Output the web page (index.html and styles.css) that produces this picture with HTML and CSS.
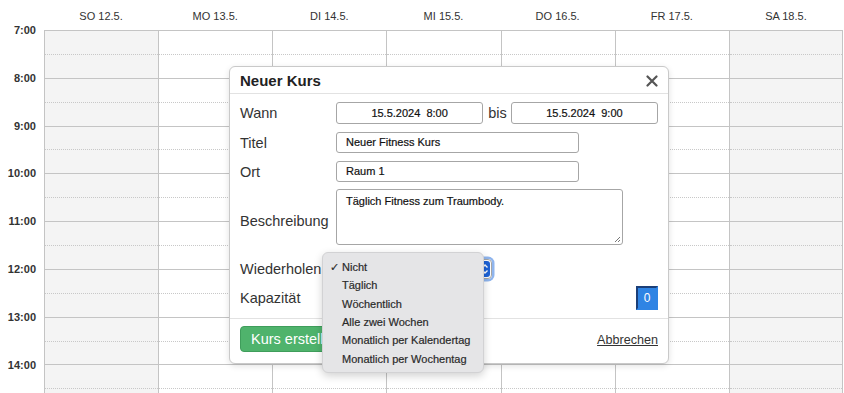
FILE: index.html
```html
<!DOCTYPE html>
<html lang="de">
<head>
    <meta charset="UTF-8">
    <meta name="viewport" content="width=device-width, initial-scale=1.0">
    <title>Kursplan</title>
    <link rel="stylesheet" href="styles.css">
</head>
<body>
    <div class="calendar">
        <div class="head-row">
            <div class="head-corner"></div>
            <div class="day-name">SO 12.5.</div>
            <div class="day-name">MO 13.5.</div>
            <div class="day-name">DI 14.5.</div>
            <div class="day-name">MI 15.5.</div>
            <div class="day-name">DO 16.5.</div>
            <div class="day-name">FR 17.5.</div>
            <div class="day-name">SA 18.5.</div>
        </div>
        <div class="grid" id="grid">
            <!-- Zeitspalte und Tage werden per Script erzeugt -->
        </div>
    </div>

    <div class="modal">
        <div class="modal-header">
            <h2 class="modal-title">Neuer Kurs</h2>
            <span class="modal-close">
                <svg width="12" height="12" viewBox="0 0 12 12"><path d="M1.5 1.5 L10.5 10.5 M10.5 1.5 L1.5 10.5" stroke="#555" stroke-width="2.2" stroke-linecap="round"/></svg>
            </span>
        </div>
        <div class="modal-body">
            <div class="form-row row-wann">
                <label class="form-label">Wann</label>
                <div class="field date-field">15.5.2024  8:00</div>
                <span class="bis">bis</span>
                <div class="field date-field">15.5.2024  9:00</div>
            </div>
            <div class="form-row row-titel">
                <label class="form-label">Titel</label>
                <div class="field text-field">Neuer Fitness Kurs</div>
            </div>
            <div class="form-row row-ort">
                <label class="form-label">Ort</label>
                <div class="field text-field">Raum 1</div>
            </div>
            <div class="form-row row-beschreibung">
                <label class="form-label">Beschreibung</label>
                <div class="field textarea-field">Täglich Fitness zum Traumbody.
                    <svg class="resize-grip" width="8" height="8" viewBox="0 0 8 8"><path d="M7 2 L2 7 M7 5 L5 7" stroke="#777" stroke-width="1"/></svg>
                </div>
            </div>
            <div class="form-row row-wiederholen">
                <label class="form-label">Wiederholen</label>
                <div class="select-field">
                    <span class="select-stepper">
                        <svg width="8" height="12" viewBox="0 0 8 12"><path d="M1.5 4.5 L4 2 L6.5 4.5 M1.5 7.5 L4 10 L6.5 7.5" stroke="#fff" stroke-width="1.4" fill="none"/></svg>
                    </span>
                </div>
            </div>
            <div class="form-row row-kapazitaet">
                <label class="form-label">Kapazität</label>
                <div class="number-field">0</div>
            </div>
        </div>
        <div class="modal-footer">
            <button class="btn btn-success">Kurs erstellen</button>
            <a class="link-cancel">Abbrechen</a>
        </div>
    </div>

    <div class="dropdown">
        <div class="dropdown-item"><span class="check">✓</span>Nicht</div>
        <div class="dropdown-item"><span class="check"></span>Täglich</div>
        <div class="dropdown-item"><span class="check"></span>Wöchentlich</div>
        <div class="dropdown-item"><span class="check"></span>Alle zwei Wochen</div>
        <div class="dropdown-item"><span class="check"></span>Monatlich per Kalendertag</div>
        <div class="dropdown-item"><span class="check"></span>Monatlich per Wochentag</div>
    </div>

    <script>
        // Raster aufbauen: Stunden 7 bis 14, halbstündige Slots
        const hours = [7, 8, 9, 10, 11, 12, 13, 14];
        const slots = 16;
        const grid = document.getElementById('grid');

        let times = '<div class="time-col">';
        hours.forEach(h => {
            times += `<div class="time-cell">${h}:00</div>`;
        });
        times += '</div>';

        let days = '';
        for (let d = 0; d < 7; d++) {
            const weekend = d === 0 || d === 6;
            days += `<div class="day-col ${weekend ? 'weekend' : ''}">`;
            for (let s = 0; s < slots; s++) {
                days += `<div class="slot ${s % 2 === 0 ? 'slot-half' : 'slot-hour'}"></div>`;
            }
            days += '</div>';
        }

        grid.innerHTML = times + days;
    </script>
</body>
</html>
```

FILE: styles.css
```css
* {
    margin: 0;
    padding: 0;
    box-sizing: border-box;
    font-family: "Liberation Sans", Arial, sans-serif;
}

html, body {
    height: 100%;
    overflow: hidden;
}

body {
    background-color: white;
    color: #333;
    position: relative;
}

.head-row,
.grid {
    display: grid;
    grid-template-columns: 44px repeat(7, 1fr);
    width: 843px;
}

.head-row {
    height: 30px;
    align-items: center;
}

.day-name {
    text-align: center;
    font-size: 11px;
    color: #333;
    padding-top: 2px;
}

.time-col {
    margin-top: -6px;
}

.time-cell {
    height: 47.8px;
    line-height: 12px;
    font-size: 11px;
    font-weight: bold;
    color: #333;
    text-align: right;
    padding-right: 8px;
}

.day-col {
    border-left: 1px solid #c4c4c4;
    border-top: 1px solid #c4c4c4;
}

.day-col:last-child {
    border-right: 1px solid #c4c4c4;
}

.weekend {
    background-color: #f4f4f4;
}

.slot {
    height: 23.9px;
}

.slot-half {
    border-bottom: 1px dotted #c8c8c8;
}

.slot-hour {
    border-bottom: 1px solid #c4c4c4;
}

.modal {
    position: absolute;
    left: 229px;
    top: 66px;
    width: 440px;
    height: 298px;
    background-color: white;
    border: 1px solid #c9c9c9;
    border-radius: 6px;
    box-shadow: 0 2px 6px rgba(0, 0, 0, 0.12);
}

.modal-header {
    display: flex;
    justify-content: space-between;
    align-items: center;
    height: 27px;
    padding: 0 10px 0 10px;
    border-bottom: 1px solid #e2e2e2;
}

.modal-title {
    font-size: 15px;
    font-weight: bold;
    color: #222;
    padding-top: 1px;
}

.modal-close {
    display: flex;
    padding-top: 2px;
}

.modal-body {
    padding: 8px 10px 8px 10px;
    border-bottom: 1px solid #e2e2e2;
}

.form-row {
    display: flex;
    align-items: center;
}

.form-label {
    width: 96px;
    flex-shrink: 0;
    font-size: 14.5px;
    color: #333;
}

.field {
    background-color: white;
    border: 1px solid #a6a6a6;
    border-radius: 3px;
    font-size: 11px;
    color: #111;
    -webkit-text-stroke: 0.2px #111;
}

.row-wann {
    height: 22px;
    margin-bottom: 8px;
}

.date-field {
    flex: 1;
    height: 22px;
    line-height: 20px;
    text-align: center;
    white-space: pre;
}

.bis {
    font-size: 14.5px;
    margin: 0 4px 0 5px;
}

.row-titel,
.row-ort {
    height: 21px;
    margin-bottom: 8px;
}

.row-ort {
    margin-bottom: 7px;
}

.text-field {
    width: 243px;
    height: 21px;
    line-height: 19px;
    padding-left: 9px;
}

.row-beschreibung {
    height: 56px;
    margin-bottom: 14px;
}

.row-beschreibung .form-label {
    padding-top: 8px;
}

.textarea-field {
    position: relative;
    width: 287px;
    height: 56px;
    padding: 5px 9px;
    line-height: 13px;
}

.resize-grip {
    position: absolute;
    right: 1px;
    bottom: 1px;
}

.row-wiederholen {
    height: 20px;
    margin-bottom: 7px;
}

.select-field {
    position: relative;
    width: 156px;
    height: 20px;
    border: 1px solid #a6a6a6;
    border-radius: 4px;
    box-shadow: 0 0 0 2.5px #8fb5ee;
}

.select-stepper {
    position: absolute;
    right: 1px;
    top: 1px;
    width: 10px;
    height: 16px;
    background-color: #1d62d6;
    border-radius: 3px;
    display: flex;
    align-items: center;
    justify-content: center;
}

.row-kapazitaet {
    height: 24px;
    justify-content: space-between;
}

.number-field {
    width: 22px;
    height: 24px;
    background-color: #2f84e4;
    border: 2px solid #1b3f78;
    border-right-color: #2f84e4;
    border-bottom-color: #2f84e4;
    color: white;
    font-size: 12px;
    text-align: center;
    line-height: 20px;
}

.modal-footer {
    display: flex;
    justify-content: space-between;
    align-items: center;
    padding: 7px 10px 0 10px;
}

.btn {
    border: 1px solid #3f9d5b;
    border-radius: 4px;
    cursor: pointer;
    font-size: 14.5px;
    height: 26px;
    padding: 0 10px;
}

.btn-success {
    background-color: #4fb36c;
    color: white;
}

.link-cancel {
    font-size: 12.6px;
    color: #333;
    text-decoration: underline;
    margin-top: 1px;
}

.dropdown {
    position: absolute;
    left: 322px;
    top: 252px;
    width: 162px;
    height: 121px;
    background-color: #e5e5e7;
    border: 1px solid #d2d2d4;
    border-radius: 6px;
    box-shadow: 0 3px 8px rgba(0, 0, 0, 0.18);
    padding-top: 5px;
}

.dropdown-item {
    display: flex;
    align-items: center;
    height: 18.3px;
    font-size: 11px;
    color: #2a2a2a;
    -webkit-text-stroke: 0.2px #2a2a2a;
    padding-left: 7px;
}

.check {
    width: 12px;
    font-size: 11px;
}
```
